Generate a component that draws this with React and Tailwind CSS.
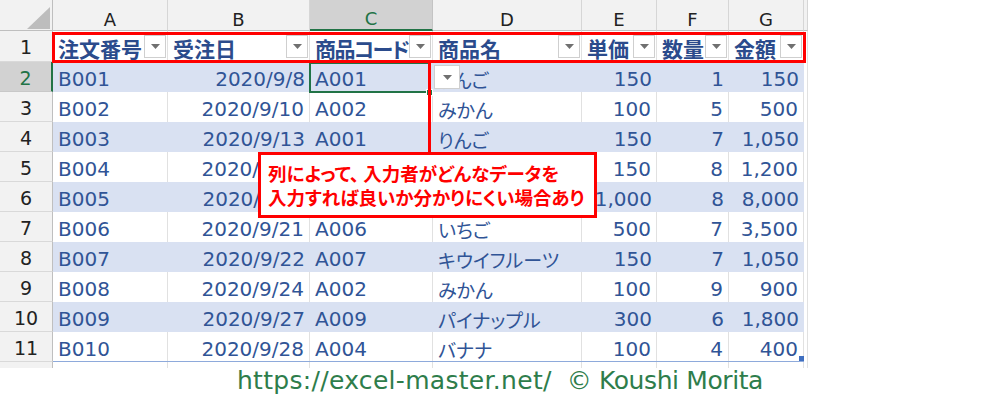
import React from 'react';

const LAT = "[font-family:'DejaVu_Sans','Noto_Sans_CJK_JP',sans-serif]";
const JP = "[font-family:'Noto_Sans_CJK_JP',sans-serif] [font-feature-settings:'palt']";

const headers = ['注文番号', '受注日', '商品コード', '商品名', '単価', '数量', '金額'];

const data = [
  ['B001', '2020/9/8', 'A001', 'りんご', '150', '1', '150'],
  ['B002', '2020/9/10', 'A002', 'みかん', '100', '5', '500'],
  ['B003', '2020/9/13', 'A001', 'りんご', '150', '7', '1,050'],
  ['B004', '2020/9/15', 'A001', 'りんご', '150', '8', '1,200'],
  ['B005', '2020/9/18', 'A005', 'メロン', '1,000', '8', '8,000'],
  ['B006', '2020/9/21', 'A006', 'いちご', '500', '7', '3,500'],
  ['B007', '2020/9/22', 'A007', 'キウイフルーツ', '150', '7', '1,050'],
  ['B008', '2020/9/24', 'A002', 'みかん', '100', '9', '900'],
  ['B009', '2020/9/27', 'A009', 'パイナップル', '300', '6', '1,800'],
  ['B010', '2020/9/28', 'A004', 'バナナ', '100', '4', '400'],
];

function Tri() {
  return (
    <svg width="9" height="5" viewBox="0 0 9 5">
      <polygon points="0,0 9,0 4.5,5" fill="#707070" />
    </svg>
  );
}

function RowHead({ n }) {
  const sel = n === 2;
  return (
    <div
      className={
        sel
          ? 'flex items-center justify-center pt-[3px] bg-[#d2d2d2] border-b border-b-[#c8c8c8] border-r-2 border-r-[#217346] text-[#217346] text-[19px] leading-none ' + LAT
          : 'flex items-center justify-center pt-[3px] bg-[#f2f2f2] border-b border-b-[#d9d9d9] border-r border-r-[#bfbfbf] text-[#222] text-[19px] leading-none ' + LAT
      }
    >
      {n}
    </div>
  );
}

export default function App() {
  const letters = ['A', 'B', 'C', 'D', 'E', 'F', 'G', ''];
  return (
    <div className="w-[1000px] h-[396px] bg-white overflow-hidden">
      <div className="relative w-[808px]">
        <div className="grid grid-cols-[53px_115px_142px_123px_149px_75px_72px_75px_4px] grid-rows-[31px_31px_repeat(10,30px)_6px]">
          {/* column letters */}
          <div className="relative bg-[#f2f2f2] border-r border-r-[#bfbfbf] border-b border-b-[#bfbfbf]">
            <svg className="absolute left-0 top-0" width="53" height="31" viewBox="0 0 53 31">
              <polygon points="27,29 50,29 50,7" fill="#bdbdbd" />
            </svg>
          </div>
          {letters.map((l, i) =>
            l === 'C' ? (
              <div
                key={i}
                className={'flex items-center justify-center pt-[9px] bg-[#d2d2d2] border-r border-r-[#c4c4c4] border-b-2 border-b-[#217346] text-[#217346] text-[18px] leading-none ' + LAT}
              >
                {l}
              </div>
            ) : (
              <div
                key={i}
                className={'flex items-center justify-center pt-[9px] bg-[#f2f2f2] border-r border-r-[#d6d6d6] border-b border-b-[#bfbfbf] text-[#222] text-[18px] leading-none ' + LAT}
              >
                {l}
              </div>
            )
          )}

          {/* header row 1 */}
          <RowHead n={1} />
          {headers.map((h, i) => (
            <div
              key={i}
              className={'relative flex items-center pt-[3px] pl-[5px] bg-white border-r border-r-[#e1e1e1] overflow-hidden whitespace-nowrap text-[21px] leading-none font-bold text-[#2b4b8c] ' + JP}
            >
              <span className={i === 2 ? 'tracking-[-1.6px]' : ''}>{h}</span>
              <div className="absolute right-[1px] top-[4px] w-[22px] h-[23px] flex items-center justify-center bg-white border border-[#cfcfcf]">
                <Tri />
              </div>
            </div>
          ))}
          <div className="bg-white border-r border-r-[#e1e1e1]" />

          {/* data rows */}
          {data.map((r, ri) => {
            const n = ri + 2;
            const band = n % 2 === 0;
            const base = band ? 'bg-[#d9e1f2]' : 'bg-white border-r border-r-[#e1e1e1]';
            return (
              <React.Fragment key={ri}>
                <RowHead n={n} />
                {r.map((v, ci) => {
                  const right = ci === 1 || ci >= 4;
                  const jp = ci === 3;
                  return (
                    <div
                      key={ci}
                      className={
                        'flex items-center pt-[4px] whitespace-nowrap overflow-hidden leading-none text-[#305496] ' +
                        base +
                        (right ? ' justify-end pr-[5px]' : ' justify-start pl-[5px]') +
                        (jp ? ' text-[19px] ' + JP : ' text-[20px] ' + LAT)
                      }
                    >
                      {v}
                    </div>
                  );
                })}
                <div className="bg-white border-r border-r-[#e1e1e1]" />
              </React.Fragment>
            );
          })}

          {/* partial row 12 */}
          <div className="bg-[#f2f2f2] border-r border-r-[#bfbfbf]" />
          {letters.map((l, i) => (
            <div key={i} className="bg-white border-r border-r-[#e1e1e1]" />
          ))}
        </div>

        {/* table bottom line */}
        <div className="absolute left-[53px] top-[361px] w-[751px] h-[1px] bg-[#8eaadb]" />
        {/* resize handle */}
        <div className="absolute left-[799px] top-[356px] w-[5px] h-[5px] bg-[#3f6fc0]" />

        {/* selection C2 */}
        <div className="absolute left-[309px] top-[62px] w-[121px] h-[31px] border-2 border-[#217346]" />
        <div className="absolute left-[426px] top-[89px] w-[7px] h-[7px] bg-[#217346] border border-white" />

        {/* dropdown in D2 */}
        <div className="absolute left-[434px] top-[65px] w-[26px] h-[24px] flex items-center justify-center bg-white border border-[#cfcfcf]">
          <Tri />
        </div>

        {/* red header box */}
        <div className="absolute left-[52px] top-[32px] w-[754px] h-[31px] border-[3px] border-[#ff0000]" />
        {/* red connector line */}
        <div className="absolute left-[428px] top-[62px] w-[3px] h-[91px] bg-[#ff0000]" />
        {/* callout */}
        <div className={'absolute left-[258px] top-[152px] w-[339px] h-[66px] bg-white border-[3px] border-[#ff0000] pl-[7px] pt-[6px] text-[#ff0000] font-bold text-[18.5px] leading-[24px] whitespace-nowrap ' + JP}>
          <div>列によって、 入力者がどんなデータを</div>
          <div>入力すれば良いか分かりにくい場合あり</div>
        </div>
      </div>

      {/* footer */}
      <div className={'h-[28px] flex justify-center items-start text-[25px] leading-none text-[#2e7d4b] whitespace-pre ' + LAT}>
        <span className="tracking-[0.3px]">https://excel-master.net/</span>
        <span className="tracking-[-0.4px]">{'  © Koushi Morita'}</span>
      </div>
    </div>
  );
}
